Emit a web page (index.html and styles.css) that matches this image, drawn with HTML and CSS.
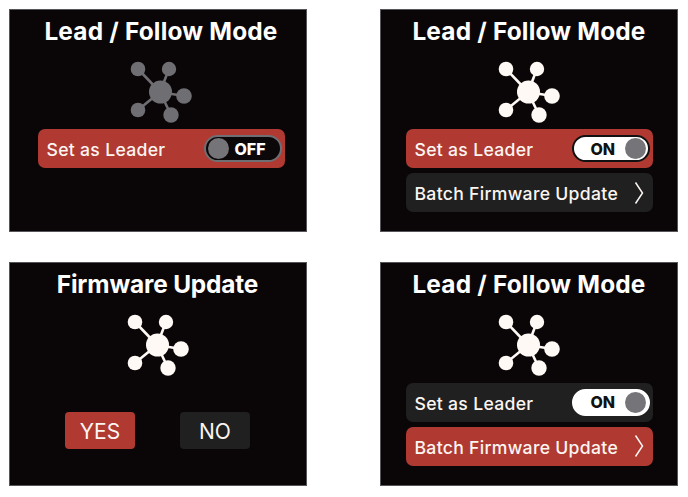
FILE: index.html
```html
<!DOCTYPE html>
<html lang="en">
<head>
<meta charset="utf-8">
<title>Lead / Follow Mode</title>
<link rel="stylesheet" href="styles.css">
</head>
<body>
<svg class="sprite" width="0" height="0" aria-hidden="true">
  <symbol id="hub" viewBox="0 0 64 62">
    <g stroke="currentColor" stroke-width="2.6">
      <line x1="9" y1="8" x2="31" y2="31"/>
      <line x1="40" y1="8" x2="31" y2="31"/>
      <line x1="55" y1="35" x2="31" y2="31"/>
      <line x1="9" y1="49" x2="31" y2="31"/>
      <line x1="42" y1="54" x2="31" y2="31"/>
    </g>
    <g fill="currentColor">
      <circle cx="31.5" cy="31" r="11.5"/>
      <circle cx="9" cy="8" r="7.3"/>
      <circle cx="40" cy="8" r="7.2"/>
      <circle cx="55" cy="35" r="7.8"/>
      <circle cx="9" cy="49" r="7.3"/>
      <circle cx="42" cy="54" r="7.7"/>
    </g>
  </symbol>
</svg>
<main class="board">
  <section class="panel panel-shift">
    <h1 class="title">Lead / Follow Mode</h1>
    <svg class="hub hub-dim"><use href="#hub"/></svg>
    <div class="rows">
      <div class="row row-red">
        <span class="label">Set as Leader</span>
        <span class="toggle toggle-off"><i class="knob"></i><b>OFF</b></span>
      </div>
    </div>
  </section>
  <section class="panel">
    <h1 class="title">Lead / Follow Mode</h1>
    <svg class="hub"><use href="#hub"/></svg>
    <div class="rows">
      <div class="row row-red">
        <span class="label">Set as Leader</span>
        <span class="toggle toggle-on"><b>ON</b><i class="knob"></i></span>
      </div>
      <div class="row row-dark">
        <span class="label">Batch Firmware Update</span>
        <svg class="chev" viewBox="0 0 10 24"><path d="M1.5 1.5 8.5 12 1.5 22.5"/></svg>
      </div>
    </div>
  </section>
  <section class="panel">
    <h1 class="title title-tight">Firmware Update</h1>
    <svg class="hub"><use href="#hub"/></svg>
    <div class="choices">
      <div class="choice row-red">YES</div>
      <div class="choice row-dark">NO</div>
    </div>
  </section>
  <section class="panel">
    <h1 class="title">Lead / Follow Mode</h1>
    <svg class="hub"><use href="#hub"/></svg>
    <div class="rows">
      <div class="row row-dark">
        <span class="label">Set as Leader</span>
        <span class="toggle toggle-on toggle-plain"><b>ON</b><i class="knob"></i></span>
      </div>
      <div class="row row-red">
        <span class="label">Batch Firmware Update</span>
        <svg class="chev" viewBox="0 0 10 24"><path d="M1.5 1.5 8.5 12 1.5 22.5"/></svg>
      </div>
    </div>
  </section>
</main>
</body>
</html>
```

FILE: styles.css
```css
* { box-sizing: border-box; }
html, body { margin: 0; background: #fff; }
body { width: 688px; height: 497px; overflow: hidden; font-family: Inter, "Noto Sans", sans-serif; }
.sprite { position: absolute; }
.board {
  display: grid;
  grid-template-columns: 298px 298px;
  grid-template-rows: 223.5px 224px;
  column-gap: 73.5px;
  row-gap: 30px;
  padding: 8.5px 0 0 8.5px;
}
.panel {
  background: #0a0607;
  color: #fff;
  border: 0.5px solid #55555a;
  display: flex;
  flex-direction: column;
  align-items: center;
  padding-top: 5px;
}
.panel-shift { padding-left: 7px; }
.title {
  margin: 0;
  font-size: 24.4px;
  line-height: 32px;
  font-weight: 700;
  letter-spacing: 0.2px;
  white-space: nowrap;
}
.title-tight { letter-spacing: -0.15px; }
.hub { width: 64px; height: 62px; margin-top: 14px; color: #fff9f6; display: block; }
.hub-dim { color: #6f6e72; }
.rows { display: flex; flex-direction: column; gap: 5px; margin-top: 6.5px; width: 247px; }
.row {
  height: 39px;
  border-radius: 7px;
  display: flex;
  align-items: center;
  justify-content: space-between;
  padding: 0 9px;
  font-size: 17.6px;
  font-weight: 500;
  letter-spacing: 0.3px;
  color: #fbf5f2;
}
.label { padding-top: 2px; }
.row-red { background: #b03a31; }
.row-dark { background: #202020; }
.toggle {
  width: 78px;
  height: 27px;
  margin-right: -6px;
  border-radius: 14px;
  display: flex;
  align-items: center;
  justify-content: space-between;
  padding: 0 3px;
  font-size: 16px;
  letter-spacing: 0;
}
.toggle b { font-weight: 800; }
.knob { width: 21px; height: 21px; border-radius: 50%; background: #757478; display: block; }
.toggle-off { background: #0c0809; border: 2px solid #6f6e72; color: #fff; padding-right: 14px; padding-left: 2px; }
.toggle-on { background: #fff; border: 2px solid #111; color: #111; padding-left: 17px; padding-right: 2px; }
.toggle-plain { border-color: #fff; }
.chev { width: 10px; height: 24px; fill: none; stroke: #fbf5f2; stroke-width: 1.5; }
.choices { display: flex; gap: 45px; margin-top: 35.5px; }
.choice {
  width: 70px;
  height: 37.5px;
  padding-top: 2px;
  border-radius: 4px;
  display: flex;
  align-items: center;
  justify-content: center;
  font-size: 21px;
  color: #fbf5f2;
}
```
